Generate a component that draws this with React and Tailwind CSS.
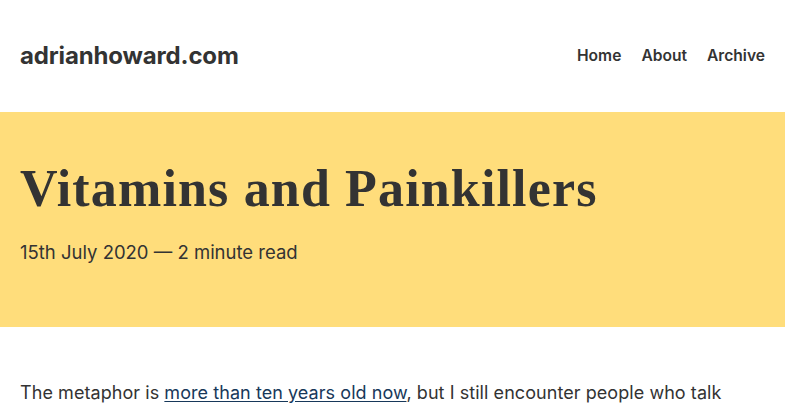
import React from 'react';

const NavLink = ({ children }) => (
    <a href="#" className="text-[#333] text-[15.6px] font-semibold">{children}</a>
);

const App = () => {
    return (
        <div className="w-[785px] bg-white text-[#333] font-['Inter',sans-serif]">
            <header className="h-[112px] px-5 flex items-center justify-between">
                <a href="#" className="text-[24px] font-bold tracking-[-0.15px] text-[#333]">adrianhoward.com</a>
                <nav className="flex items-center gap-[20px]">
                    <NavLink>Home</NavLink>
                    <NavLink>About</NavLink>
                    <NavLink>Archive</NavLink>
                </nav>
            </header>

            <section className="bg-[#ffdd7b] px-5 pt-[46px] pb-[61px]">
                <h1 className="font-['Liberation_Serif',serif] font-bold text-[52px] leading-[62px] tracking-[1.15px]">
                    Vitamins and Painkillers
                </h1>
                <p className="mt-[18px] text-[18.5px] leading-[28px]">15th July 2020 — 2 minute read</p>
            </section>

            <main className="px-5 pt-[50px]">
                <p className="text-[18px] leading-[32px] tracking-[0.06px]">
                    The metaphor is{' '}
                    <a href="#" className="text-[#17385a] underline underline-offset-2">more than ten years old now</a>
                    , but I still encounter people who talk
                </p>
            </main>
        </div>
    );
};

export default App;
